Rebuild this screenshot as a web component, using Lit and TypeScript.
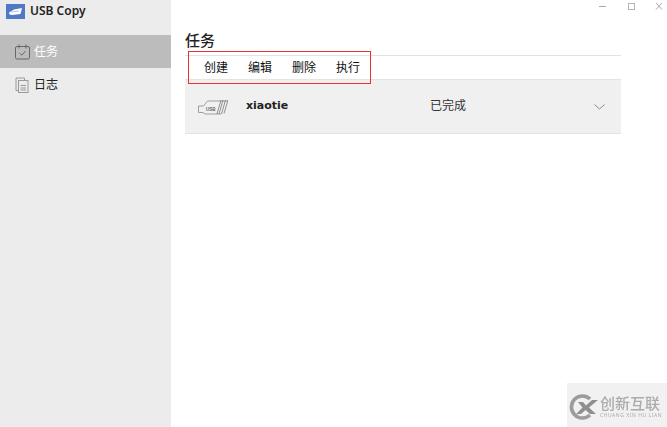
import { LitElement, html, css } from "lit";
import { customElement } from "lit/decorators.js";

@customElement("app-root")
export class AppRoot extends LitElement {
  static styles = css`
    :host {
      display: block;
      position: relative;
      width: 667px;
      height: 427px;
      overflow: hidden;
      background: #fff;
      font-family: "Noto Sans", "Noto Sans CJK SC", sans-serif;
      color: #222;
    }
    .app { display: flex; height: 427px; }
    .side { width: 171px; background: #ececec; flex: none; display: flex; flex-direction: column; }
    .brand { height: 35px; display: flex; align-items: flex-start; padding: 4px 0 0 6px; box-sizing: border-box; gap: 5px; }
    .brand svg { display: block; }
    .brand span { font-size: 12px; font-weight: 600; line-height: 14px; color: #222; }
    .nav { height: 33px; display: flex; align-items: center; padding-left: 15px; gap: 4px; font-size: 12px; color: #222; }
    .nav span { padding-bottom: 2px; }
    .nav.on { background: #bcbcbc; color: #fff; }
    .main { flex: 1; padding-left: 14px; display: flex; flex-direction: column; }
    .content { width: 436px; padding-top: 30px; }
    h1 { margin: 0; font-size: 15px; font-weight: 500; line-height: 20px; height: 25px; color: #222; border-bottom: 1px solid #e2e2e2; }
    .tools { height: 23px; display: flex; padding: 0 0 2px 19px; box-sizing: border-box; gap: 20px; align-items: center; font-size: 12px; color: #111; }
    .row { height: 55px; box-sizing: border-box; background: #f0f0f0; border-top: 1px solid #e4e4e4; border-bottom: 1px solid #dfe4ea; display: flex; align-items: center; font-size: 12px; }
    .usb { margin: 1px 0 0 13px; flex: none; }
    .name { margin-left: 18px; width: 184px; font-weight: 700; font-size: 11px; color: #222; font-family: "DejaVu Sans", sans-serif; padding-bottom: 3px; }
    .status { flex: 1; color: #333; padding-bottom: 3px; }
    .chev { margin-right: 16px; flex: none; margin-top: 1px; }
    .mark { position: absolute; left: 188px; top: 51px; width: 183px; height: 33px; box-sizing: border-box; border: 1px solid #f03030; }
    .winctl { position: absolute; right: 0; top: 0; display: flex; }
    .winctl svg { display: block; }
    .wm { position: absolute; right: 0; bottom: 0; width: 100px; height: 44px; background: #f1f1f1; display: flex; align-items: center; padding: 4px 0 0 2px; box-sizing: border-box; gap: 1px; filter: blur(0.4px); }
    .wmt { display: flex; flex-direction: column; color: #ababab; }
    .wmt b { font-size: 15px; font-weight: 500; line-height: 17px; white-space: nowrap; }
    .wmt i { font-style: normal; font-size: 5px; line-height: 7px; letter-spacing: 0.55px; white-space: nowrap; }
  `;

  render() {
    return html`
      <div class="app">
        <aside class="side">
          <div class="brand">
            <svg width="19" height="15" viewBox="0 0 19 15">
              <rect width="19" height="15" fill="#4f79c4" />
              <path d="M3 8.5 L8 5.5 L16 4 L14.5 10 L6 11 L3.5 10.5 Z" fill="#fff" />
              <path d="M5 8 L13 7" stroke="#9db6e0" stroke-width="0.8" />
            </svg>
            <span>USB Copy</span>
          </div>
          <div class="nav on">
            <svg width="15" height="16" viewBox="0 0 15 16" fill="none" stroke="#666" stroke-width="1">
              <rect x="0.5" y="2.5" width="14" height="12.5" rx="1.5" />
              <path d="M4 0.5V4.5M11 0.5V4.5" />
              <path d="M4.5 9 L6.8 11.2 L10.5 7" />
            </svg>
            <span>任务</span>
          </div>
          <div class="nav">
            <svg width="15" height="16" viewBox="0 0 15 16" fill="none" stroke="#9a9a9a" stroke-width="1">
              <path d="M3 13.5H1V1H9.5V3" />
              <rect x="3.5" y="3.5" width="9.5" height="12" fill="#ececec" />
              <path d="M5.5 8.5H11M5.5 11H11M5.5 13H11" />
            </svg>
            <span>日志</span>
          </div>
        </aside>
        <main class="main">
          <div class="content">
            <h1>任务</h1>
            <div class="tools"><span>创建</span><span>编辑</span><span>删除</span><span>执行</span></div>
            <div class="row">
              <svg class="usb" width="30" height="18" viewBox="0 0 30 18" fill="none" stroke="#8a8a8a" stroke-width="0.8">
                <path d="M0.5 8H5.5L9.5 3H30M0.5 8V14.5H5L7 16H23" />
                <path d="M21 16L25 2M23.5 16L27.5 2M26 15.5L30 2M19 16L23 2" stroke="#777" />
                <text x="8" y="12.5" font-size="4.5" fill="#666" stroke="none" font-family="Liberation Sans" font-weight="700">USB</text>
              </svg>
              <span class="name">xiaotie</span>
              <span class="status">已完成</span>
              <svg class="chev" width="11" height="6" viewBox="0 0 11 6" fill="none" stroke="#8a8a8a"><path d="M0.5 0.5L5.5 5L10.5 0.5" /></svg>
            </div>
          </div>
        </main>
      </div>
      <div class="mark"></div>
      <div class="winctl">
        <svg width="71" height="12" viewBox="0 0 71 12" fill="none" stroke="#a8a8a8">
          <path d="M3 6.5H10" />
          <rect x="32.5" y="3.5" width="6" height="6" stroke="#b4b4b4" />
          <path d="M60 3L66 9.5M66 3L60 9.5" />
        </svg>
      </div>
      <div class="wm">
        <svg width="30" height="26" viewBox="0 0 30 26" fill="none">
          <path d="M21 5A11 11 0 1 0 21 21" stroke="#9c9c9c" stroke-width="3.6" />
          <path d="M9 8H14L17 11.5L23 6H29L20 13.5L27 20H21L16.5 16L12 20H7L13.5 13.5Z" fill="#8f8f8f" />
        </svg>
        <div class="wmt"><b>创新互联</b><i>CHUANG XIN HU LIAN</i></div>
      </div>
    `;
  }
}
